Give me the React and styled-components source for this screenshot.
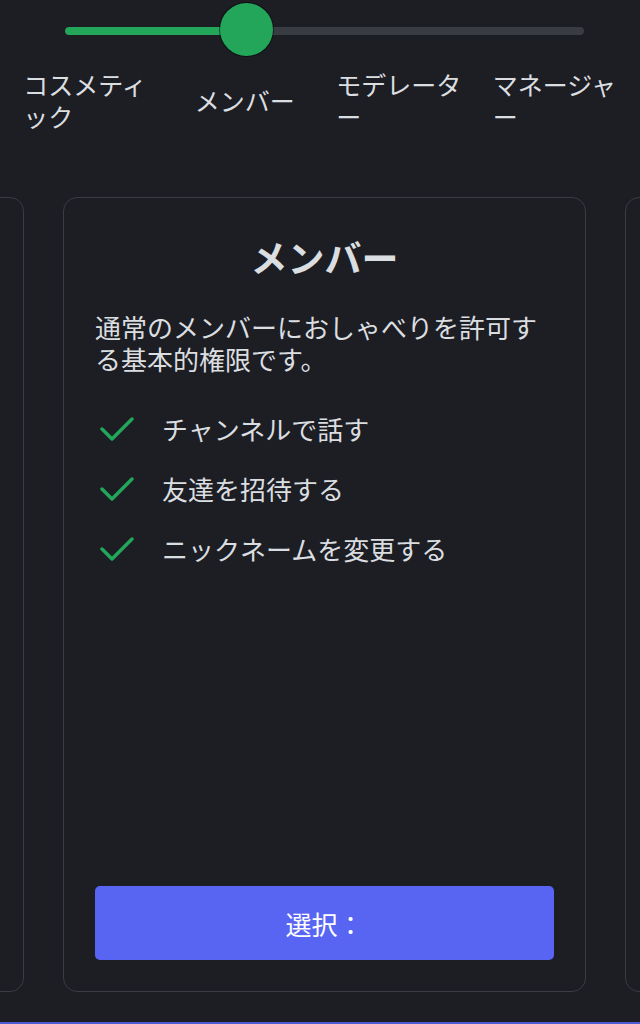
import React from 'react'
import styled, { createGlobalStyle } from 'styled-components'

const GlobalStyle = createGlobalStyle`
    html, body {
        margin: 0;
        padding: 0;
        background: #1d1e23;
    }
    * {
        box-sizing: border-box;
    }
`

const Page = styled.div`
    width: 640px;
    height: 1024px;
    background: #1d1e23;
    color: #dbdee1;
    font-family: "Noto Sans CJK JP", "Noto Sans", sans-serif;
    padding-top: 3px;
    overflow: hidden;
    border-bottom: 2px solid #4f5bd5;
`

const SliderWrap = styled.div`
    position: relative;
    display: flex;
    align-items: center;
    height: 52px;
    margin: 0 56px 0 65px;
`

const Track = styled.div`
    flex: 1;
    height: 8px;
    margin-top: 4px;
    border-radius: 4px;
    background: #3a3c43;
    overflow: hidden;
`

const Fill = styled.div`
    height: 100%;
    background: #23a55a;
    border-radius: 4px;
`

const Thumb = styled.div`
    position: absolute;
    top: 0;
    width: 53px;
    height: 53px;
    margin-left: -26px;
    border-radius: 50%;
    background: #23a55a;
    box-shadow: 0 0 0 1px rgba(0, 0, 0, 0.5);
`

const Labels = styled.div`
    display: grid;
    grid-template-columns: repeat(4, 1fr);
    align-items: center;
    justify-items: center;
    padding: 0 4px 0 10px;
    margin-top: 13px;
`

const Label = styled.div`
    max-width: 130px;
    font-size: 25px;
    line-height: 32px;
    text-align: left;
    color: #dbdee1;
`

const Carousel = styled.div`
    display: flex;
    justify-content: center;
    gap: 39px;
    padding-left: 9px;
    margin-top: 65px;
`

const Card = styled.div`
    flex-shrink: 0;
    width: 523px;
    height: 795px;
    display: flex;
    flex-direction: column;
    padding: 34px 31px 31px;
    border: 1.5px solid #3b3c44;
    border-radius: 14px;
    background: #1d1e23;
`

const Title = styled.div`
    font-size: 37px;
    font-weight: 700;
    line-height: 50px;
    text-align: center;
    color: #dbdee1;
`

const Desc = styled.div`
    margin-top: 29px;
    font-size: 26px;
    line-height: 32px;
    color: #dbdee1;
`

const List = styled.div`
    display: flex;
    flex-direction: column;
    gap: 28px;
    margin-top: 38px;
`

const Item = styled.div`
    display: flex;
    align-items: center;
    gap: 28px;
    padding-left: 5px;
    font-size: 26px;
    line-height: 32px;
`

const Button = styled.button`
    margin-top: auto;
    height: 74px;
    width: 100%;
    border: none;
    border-radius: 5px;
    background: #5865f2;
    color: #ffffff;
    font-family: inherit;
    font-size: 26px;
`

const Check = () => (
    <svg width="34" height="26" viewBox="0 0 34 26" fill="none">
        <path d="M2 13 L12 23 L32 3" stroke="#23a55a" strokeWidth="3.5" strokeLinecap="round" strokeLinejoin="round" />
    </svg>
)

const tiers = ['コスメティック', 'メンバー', 'モデレーター', 'マネージャー']
const perks = ['チャンネルで話す', '友達を招待する', 'ニックネームを変更する']

const App = () => {
    const value = 34.9
    return (
        <Page>
            <GlobalStyle />
            <SliderWrap>
                <Track>
                    <Fill style={{ width: `${value}%` }} />
                </Track>
                <Thumb style={{ left: `${value}%` }} />
            </SliderWrap>
            <Labels>
                {tiers.map((t) => (
                    <Label key={t}>{t}</Label>
                ))}
            </Labels>
            <Carousel>
                <Card />
                <Card>
                    <Title>メンバー</Title>
                    <Desc>通常のメンバーにおしゃべりを許可する基本的権限です。</Desc>
                    <List>
                        {perks.map((p) => (
                            <Item key={p}>
                                <Check />
                                {p}
                            </Item>
                        ))}
                    </List>
                    <Button>選択：</Button>
                </Card>
                <Card />
            </Carousel>
        </Page>
    )
}

export default App
